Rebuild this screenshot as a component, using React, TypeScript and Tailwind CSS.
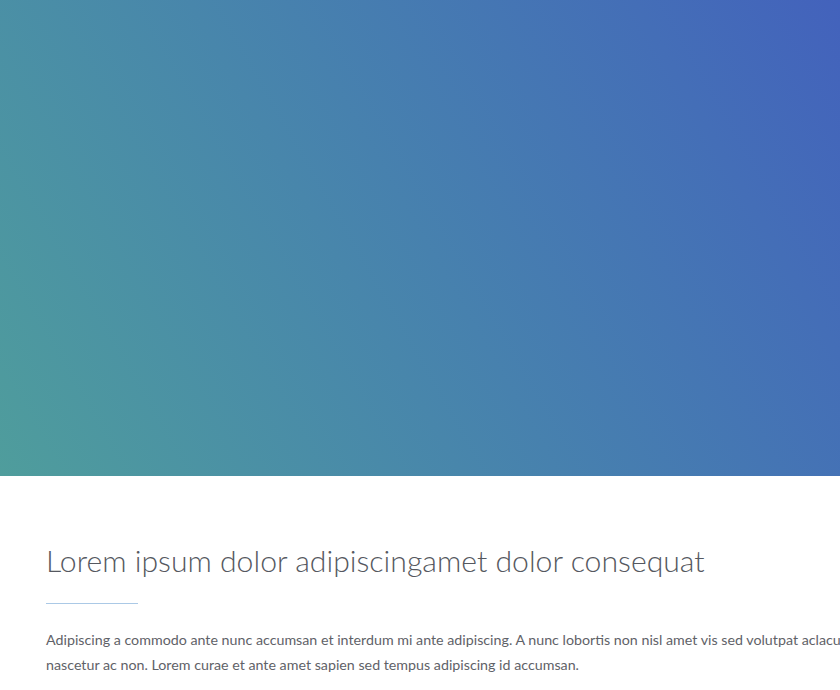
import React from 'react';

const Hero = () => {
  return <div className="h-[476px] w-full bg-linear-60 from-[#4f9d9c] to-[#4362bc]" />;
};

const Intro = () => {
  return (
    <div className="px-[46px] pt-[64px]">
      <h2 className="text-[30.2px] font-light leading-[40px] text-[#555860] whitespace-nowrap">
        Lorem ipsum dolor adipiscingamet dolor consequat
      </h2>
      <div className="mt-[23px] h-px w-[92px] bg-[#abc9e6]" />
      <p className="mt-[23px] text-[14.25px] leading-[25px] text-[#5f6268] whitespace-nowrap">
        Adipiscing a commodo ante nunc accumsan et interdum mi ante adipiscing. A nunc lobortis non nisl amet vis sed volutpat aclacus parturient
        <br />
        nascetur ac non. Lorem curae et ante amet sapien sed tempus adipiscing id accumsan.
      </p>
    </div>
  );
};

export default function App() {
  return (
    <div className="h-[690px] w-[840px] overflow-hidden bg-white font-['Lato',sans-serif]">
      <Hero />
      <Intro />
    </div>
  );
}
